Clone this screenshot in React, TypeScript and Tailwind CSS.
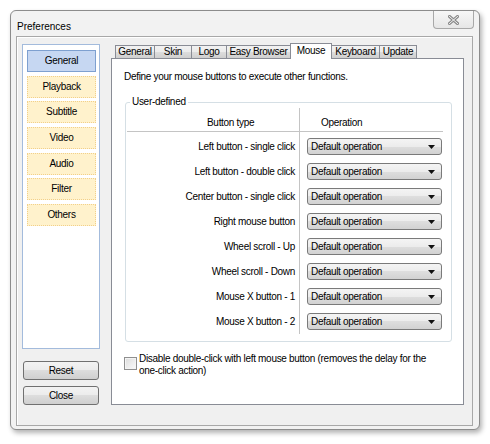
import React from "react";

const sections = ["General", "Playback", "Subtitle", "Video", "Audio", "Filter", "Others"];

const tabs = [
  { label: "General", w: "w-[40px]" },
  { label: "Skin", w: "w-[38px]" },
  { label: "Logo", w: "w-[36px]" },
  { label: "Easy Browser", w: "w-[65px]" },
  { label: "Mouse", w: "w-[42px]", active: true },
  { label: "Keyboard", w: "w-[49px]" },
  { label: "Update", w: "w-[38px]" },
];

const bindings = [
  "Left button - single click",
  "Left button - double click",
  "Center button - single click",
  "Right mouse button",
  "Wheel scroll - Up",
  "Wheel scroll - Down",
  "Mouse X button - 1",
  "Mouse X button - 2",
];

function CloseGlyph() {
  return (
    <svg width="11" height="10" viewBox="0 0 11 10">
      <path d="M1.5 1.5 L9.5 8.5 M9.5 1.5 L1.5 8.5" stroke="#8a8a8a" strokeWidth="3" strokeLinecap="square" />
      <path d="M1.5 1.5 L9.5 8.5 M9.5 1.5 L1.5 8.5" stroke="#f4f4f4" strokeWidth="1" strokeLinecap="square" />
    </svg>
  );
}

function Combo() {
  return (
    <div className="flex h-[17px] w-[135px] items-center justify-between rounded-[3px] border border-[#7a7a7a] bg-[linear-gradient(#f4f4f4,#ececec_50%,#dedede_50%,#d2d2d2)] pl-[3px] pr-[6px]">
      <span>Default operation</span>
      <svg width="7" height="4" viewBox="0 0 7 4">
        <path d="M0 0 H7 L3.5 4 Z" fill="#111" />
      </svg>
    </div>
  );
}

function PushButton({ children }: { children: React.ReactNode }) {
  return (
    <div className="ml-px flex h-[19px] w-[76px] items-center justify-center rounded-[3px] border border-[#707070] bg-[linear-gradient(#f3f3f3,#ebebeb_50%,#dddddd_50%,#cfcfcf)]">
      {children}
    </div>
  );
}

export default function App() {
  return (
    <div
      className="min-h-[444px] bg-white pl-[10px] pt-[10px] text-[10px] leading-[12px] tracking-[-0.3px] text-black"
      style={{ fontFamily: '"Liberation Sans", Arial, sans-serif' }}
    >
      <div className="flex h-[420px] w-[470px] flex-col rounded-[6px] border border-[#8c8c8c] bg-[#f2f2f2] shadow-[2px_3px_5px_rgba(0,0,0,0.3)]">
        {/* title bar */}
        <div className="flex h-[25px] items-start justify-between">
          <span className="ml-[6px] mt-[10px] tracking-normal">Preferences</span>
          <div className="mr-[5px] flex h-[18px] w-[41px] items-center justify-center rounded-b-[4px] border border-t-0 border-[#a8a8a8] bg-[linear-gradient(#f7f7f7,#e6e6e6)]">
            <CloseGlyph />
          </div>
        </div>

        {/* client area */}
        <div className="ml-[5px] mr-[6px] flex h-[390px] border border-[#a8a8a8] bg-[#f0f0f0] pl-[5px] pt-[6px] shadow-[inset_1px_1px_0_#fff]">
          <div className="mt-px flex w-[78px] flex-col">
            <div className="flex h-[305px] flex-col gap-[3.7px] border border-[#a3bbdc] bg-white px-[4px] pt-[5px]">
              {sections.map((s, i) => (
                <div
                  key={s}
                  className={
                    i === 0
                      ? "flex h-[22px] w-[69px] items-center justify-center border border-[#7ea0d0] bg-[#c6d7f2]"
                      : "flex h-[22px] w-[69px] items-center justify-center border border-dotted border-[#f2d08a] bg-[#fff2cc]"
                  }
                >
                  {s}
                </div>
              ))}
            </div>
            <div className="mt-[12px] flex flex-col gap-[6px]">
              <PushButton>Reset</PushButton>
              <PushButton>Close</PushButton>
            </div>
          </div>

          <div className="ml-[11px] flex w-[353px] flex-col">
            {/* tab strip */}
            <div className="flex h-[15px] items-end pl-[4px]">
              {tabs.map((t, i) =>
                t.active ? (
                  <div
                    key={t.label}
                    className={`relative z-10 -mb-px -ml-px flex h-[16px] ${t.w} items-start justify-center border border-b-0 border-[#898c95] bg-white pt-[1px]`}
                  >
                    {t.label}
                  </div>
                ) : (
                  <div
                    key={t.label}
                    className={`flex h-[13px] ${t.w} ${i === 0 ? "" : "-ml-px"} items-center justify-center border border-b-0 border-[#898c95] bg-[linear-gradient(#f2f2f2,#ebebeb_50%,#dddddd_50%,#cfcfcf)]`}
                  >
                    {t.label}
                  </div>
                ),
              )}
            </div>

            {/* tab page */}
            <div className="flex h-[347px] flex-col border border-[#898c95] bg-white">
              <p className="pl-[12px] pt-[12px]">Define your mouse buttons to execute other functions.</p>

              <fieldset className="ml-[13px] mt-[13px] w-[327px] rounded-[3px] border border-[#d5dfe5] pb-[7px]">
                <legend className="ml-[4px] px-[2px]">User-defined</legend>
                <div className="ml-px w-[316px]">
                  <div className="flex h-[24px] border-b border-[#c4c4c4]">
                    <div className="flex w-[173px] items-end border-r border-[#c4c4c4] pb-[2px] pl-[80px]">Button type</div>
                    <div className="flex items-end pb-[2px] pl-[21px]">Operation</div>
                  </div>
                  <div className="flex">
                    <div className="flex w-[173px] flex-col gap-[8px] border-r border-[#c4c4c4] pb-[4px] pr-[4px] pt-[6px]">
                      {bindings.map((b) => (
                        <div key={b} className="flex h-[17px] items-center justify-end">
                          {b}
                        </div>
                      ))}
                    </div>
                    <div className="flex flex-col gap-[8px] pl-[7px] pt-[6px]">
                      {bindings.map((b) => (
                        <Combo key={b} />
                      ))}
                    </div>
                  </div>
                </div>
              </fieldset>

              <div className="ml-[12px] mt-[11px] flex items-start gap-[2px]">
                <div className="mt-[4px] h-[13px] w-[13px] shrink-0 border border-[#8f8f8f] bg-[linear-gradient(135deg,#dcdcdc,#fbfbfb)] shadow-[inset_0_0_0_1px_#f4f4f4]" />
                <span>
                  Disable double-click with left mouse button (removes the delay for the
                  <br />
                  one-click action)
                </span>
              </div>
            </div>
          </div>
        </div>
      </div>
    </div>
  );
}
